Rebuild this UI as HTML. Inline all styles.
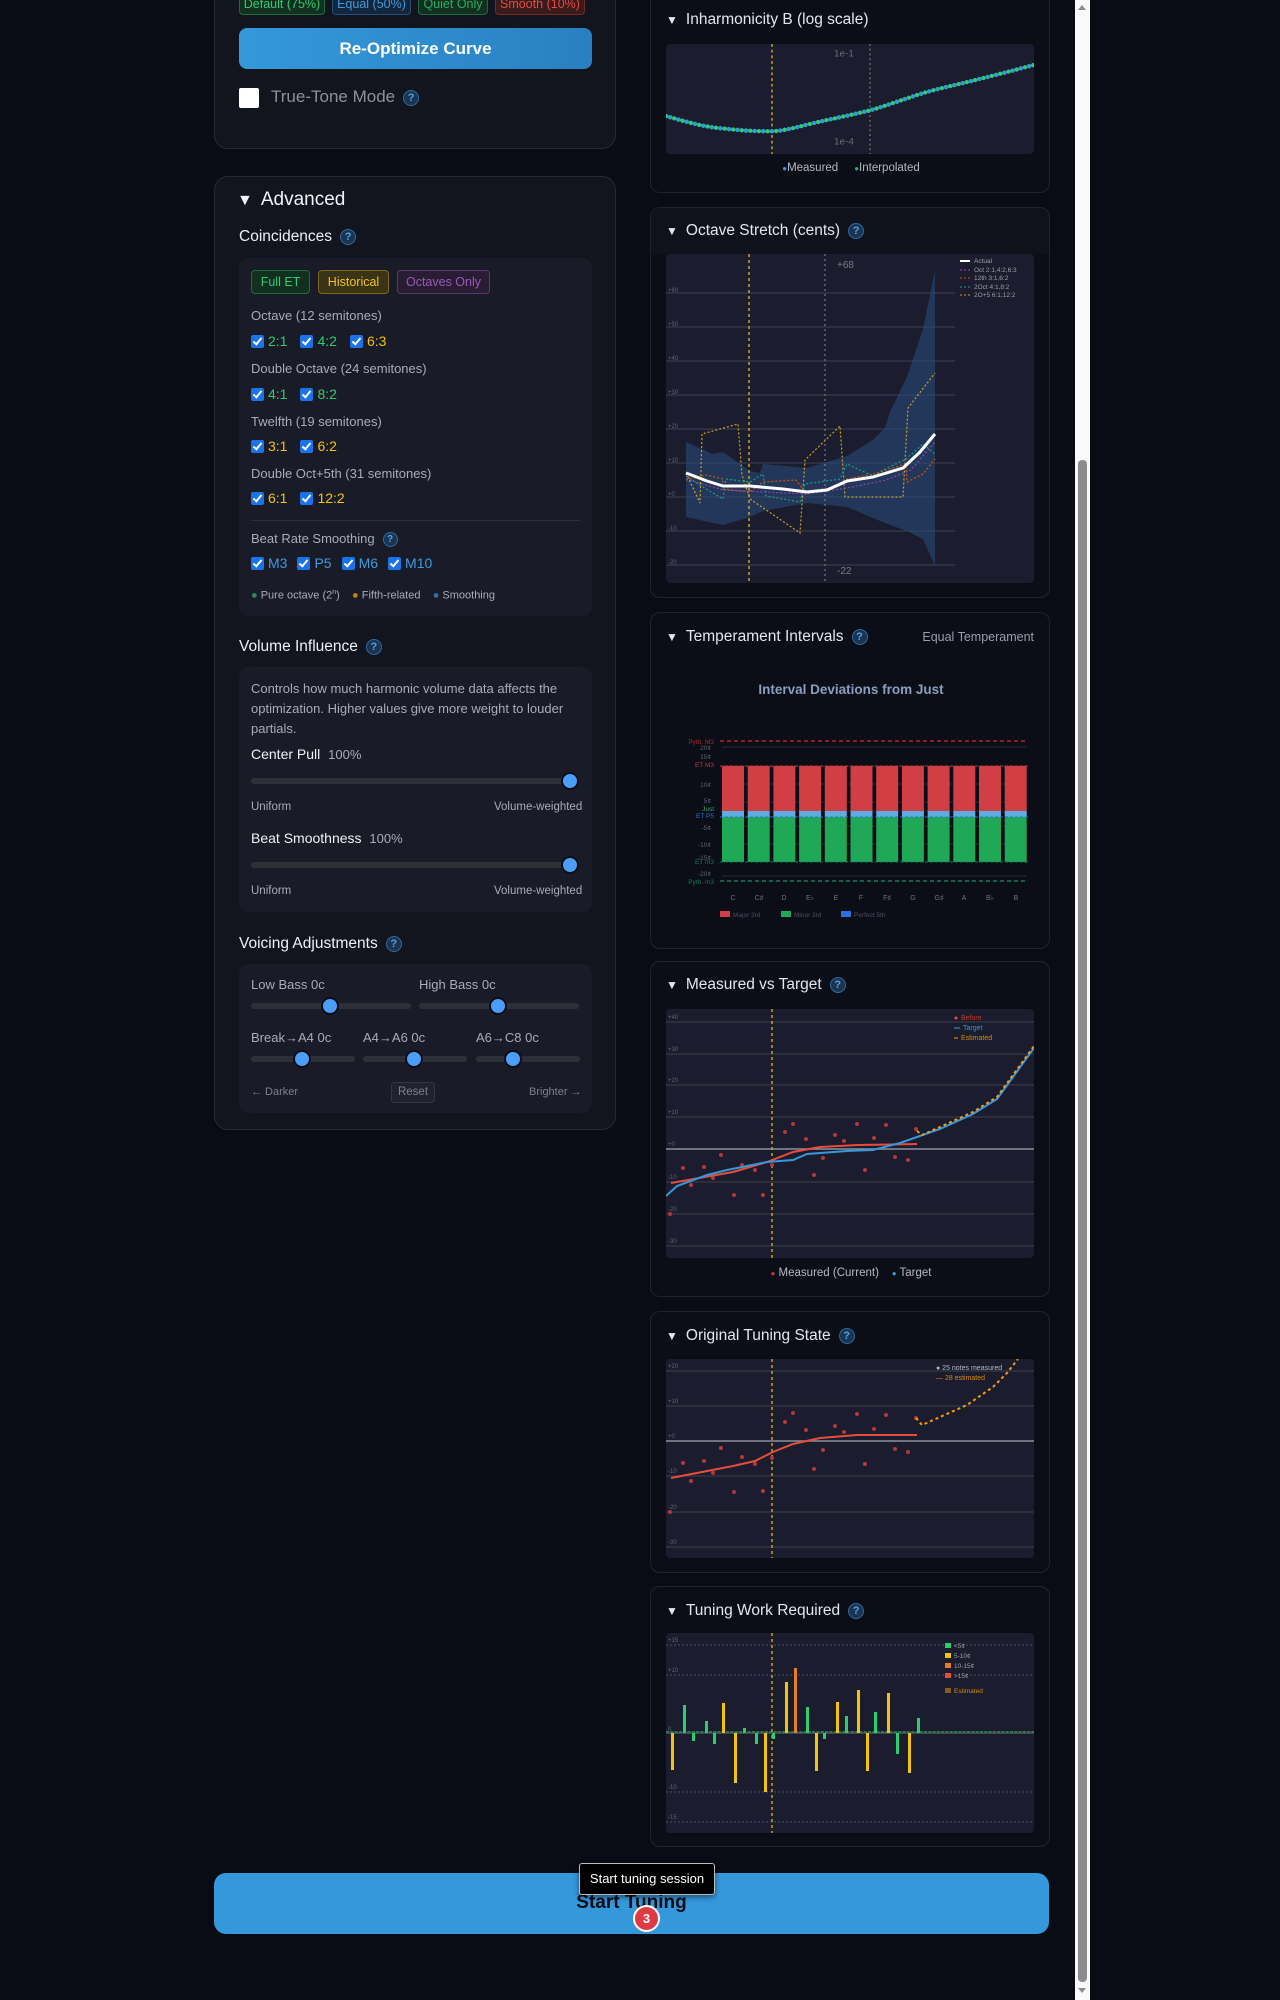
<!DOCTYPE html>
<html><head><meta charset="utf-8">
<style>
*{box-sizing:border-box;margin:0;padding:0}
html,body{width:1280px;height:2000px;overflow:hidden;background:#0a0c15;font-family:"Liberation Sans",sans-serif;color:#d6d8e0}
.a{position:absolute}
.panel{position:absolute;background:#12141e;border:1px solid #262938;border-radius:14px}
.box{position:absolute;background:#191b27;border-radius:10px}
.card{position:absolute;left:650px;width:400px;background:#0b0d17;border:1px solid #1f2230;border-radius:10px;overflow:hidden}
.ct{position:absolute;left:15px;font-size:15.5px;color:#e4e6ee;white-space:nowrap}
.q{display:inline-block;width:16px;height:16px;border-radius:50%;background:#1b3550;border:1px solid #2d6aa0;color:#4da3e8;font-size:11px;line-height:14px;text-align:center;font-weight:bold;vertical-align:middle;margin-left:8px}
.chip{position:absolute;height:21px;border-radius:4px;font-size:12.5px;line-height:19px;text-align:center;border:1px solid}
.h{position:absolute;left:239px;font-size:15.5px;color:#eef0f5;white-space:nowrap}
.lbl{position:absolute;font-size:13px;color:#a9acb8;white-space:nowrap}
.cb{display:inline-block;width:13px;height:13px;background:#1a73e8;border-radius:2px;vertical-align:-2px;margin-right:4px;position:relative}
.cb:after{content:"";position:absolute;left:4px;top:1px;width:3px;height:7px;border:solid #fff;border-width:0 2px 2px 0;transform:rotate(40deg)}
.row{position:absolute;left:251px;font-size:14px;white-space:nowrap}
.row span.i{margin-right:13px}
.trk{position:absolute;height:6px;background:#2e3038;border-radius:3px}
.knob{position:absolute;width:18px;height:18px;border-radius:50%;background:#4a9df8;border:2px solid #0b0d17}
.chart{position:absolute;left:15px;background:#1b1d2e;border-radius:4px;overflow:hidden}
svg text{font-family:"Liberation Sans",sans-serif}
</style></head><body>

<!-- LEFT top panel -->
<div class="panel" style="left:214px;top:-20px;width:402px;height:169px"></div>
<div class="chip" style="left:239px;top:-6px;width:86px;color:#2ecc71;border-color:#1f6b40;background:#12301f">Default (75%)</div>
<div class="chip" style="left:332px;top:-6px;width:79px;color:#3d9be0;border-color:#24507a;background:#14263c">Equal (50%)</div>
<div class="chip" style="left:418px;top:-6px;width:70px;color:#27ae60;border-color:#1f6b40;background:#12301f">Quiet Only</div>
<div class="chip" style="left:495px;top:-6px;width:90px;color:#e74c3c;border-color:#7a2a25;background:#3a1a1c">Smooth (10%)</div>
<div class="a" style="left:239px;top:28px;width:353px;height:41px;border-radius:8px;background:linear-gradient(90deg,#3498db,#2980c0);color:#fff;font-weight:bold;font-size:17px;text-align:center;line-height:41px">Re-Optimize Curve</div>
<div class="a" style="left:239px;top:88px;width:20px;height:20px;background:#fff;border-radius:2px"></div>
<div class="a" style="left:271px;top:87px;font-size:17px;color:#8e909a">True-Tone Mode<span class="q">?</span></div>

<!-- Advanced panel -->
<div class="panel" style="left:214px;top:176px;width:402px;height:954px"></div>
<div class="a" style="left:237px;top:189px;font-size:19px;color:#f0f2f6"><span style="font-size:16px;margin-right:8px">▼</span>Advanced</div>
<div class="h" style="top:228px">Coincidences<span class="q">?</span></div>
<div class="box" style="left:239px;top:258px;width:353px;height:358px"></div>
<div class="chip" style="left:251px;top:270px;width:59px;height:24px;line-height:22px;color:#2ecc71;border-color:#1f6b40;background:#12301f">Full ET</div>
<div class="chip" style="left:318px;top:270px;width:71px;height:24px;line-height:22px;color:#f1c40f;border-color:#7a6a1a;background:#3a3316">Historical</div>
<div class="chip" style="left:397px;top:270px;width:93px;height:24px;line-height:22px;color:#9b59b6;border-color:#5b3a6e;background:#281d34">Octaves Only</div>
<div class="lbl" style="left:251px;top:308px">Octave (12 semitones)</div>
<div class="row" style="top:333px"><span class="i" style="color:#2ecc71"><span class="cb"></span>2:1</span><span class="i" style="color:#2ecc71"><span class="cb"></span>4:2</span><span class="i" style="color:#f1c40f"><span class="cb"></span>6:3</span></div>
<div class="lbl" style="left:251px;top:361px">Double Octave (24 semitones)</div>
<div class="row" style="top:386px"><span class="i" style="color:#2ecc71"><span class="cb"></span>4:1</span><span class="i" style="color:#2ecc71"><span class="cb"></span>8:2</span></div>
<div class="lbl" style="left:251px;top:414px">Twelfth (19 semitones)</div>
<div class="row" style="top:438px"><span class="i" style="color:#f1c40f"><span class="cb"></span>3:1</span><span class="i" style="color:#f1c40f"><span class="cb"></span>6:2</span></div>
<div class="lbl" style="left:251px;top:466px">Double Oct+5th (31 semitones)</div>
<div class="row" style="top:490px"><span class="i" style="color:#f1c40f"><span class="cb"></span>6:1</span><span class="i" style="color:#f1c40f"><span class="cb"></span>12:2</span></div>
<div class="a" style="left:251px;top:520px;width:329px;height:1px;background:#2c2f3c"></div>
<div class="lbl" style="left:251px;top:531px">Beat Rate Smoothing<span class="q" style="width:15px;height:15px;font-size:10px;line-height:13px">?</span></div>
<div class="row" style="top:555px;color:#3d9be0"><span class="i" style="margin-right:10px"><span class="cb"></span>M3</span><span class="i" style="margin-right:10px"><span class="cb"></span>P5</span><span class="i" style="margin-right:10px"><span class="cb"></span>M6</span><span class="i"><span class="cb"></span>M10</span></div>
<div class="a" style="left:251px;top:589px;font-size:11px;color:#a9acb8;white-space:nowrap"><span style="color:#2e8b57">●</span> Pure octave (2<sup style="font-size:7px">n</sup>) &nbsp;&nbsp; <span style="color:#b8860b">●</span> Fifth-related &nbsp;&nbsp; <span style="color:#2f6fa3">●</span> Smoothing</div>

<div class="h" style="top:638px">Volume Influence<span class="q">?</span></div>
<div class="box" style="left:239px;top:667px;width:353px;height:245px"></div>
<div class="a" style="left:251px;top:679px;width:330px;font-size:13px;line-height:20px;color:#a9acb8">Controls how much harmonic volume data affects the optimization. Higher values give more weight to louder partials.</div>
<div class="a" style="left:251px;top:746px;font-size:14px;color:#f0f2f6">Center Pull <span style="color:#a9acb8;font-size:13px;margin-left:4px">100%</span></div>
<div class="trk" style="left:251px;top:778px;width:328px"></div><div class="knob" style="left:561px;top:772px"></div>
<div class="lbl" style="left:251px;top:801px;font-size:11.5px">Uniform</div><div class="lbl" style="left:494px;top:801px;font-size:11.5px">Volume-weighted</div>
<div class="a" style="left:251px;top:830px;font-size:14px;color:#f0f2f6">Beat Smoothness <span style="color:#a9acb8;font-size:13px;margin-left:4px">100%</span></div>
<div class="trk" style="left:251px;top:862px;width:328px"></div><div class="knob" style="left:561px;top:856px"></div>
<div class="lbl" style="left:251px;top:885px;font-size:11.5px">Uniform</div><div class="lbl" style="left:494px;top:885px;font-size:11.5px">Volume-weighted</div>

<div class="h" style="top:935px">Voicing Adjustments<span class="q">?</span></div>
<div class="box" style="left:239px;top:964px;width:353px;height:149px"></div>
<div class="lbl" style="left:251px;top:977px">Low Bass 0c</div><div class="lbl" style="left:419px;top:977px">High Bass 0c</div>
<div class="trk" style="left:251px;top:1003px;width:160px"></div><div class="knob" style="left:321px;top:997px"></div>
<div class="trk" style="left:419px;top:1003px;width:160px"></div><div class="knob" style="left:489px;top:997px"></div>
<div class="lbl" style="left:251px;top:1030px">Break→A4 0c</div><div class="lbl" style="left:363px;top:1030px">A4→A6 0c</div><div class="lbl" style="left:476px;top:1030px">A6→C8 0c</div>
<div class="trk" style="left:251px;top:1056px;width:104px"></div><div class="knob" style="left:293px;top:1050px"></div>
<div class="trk" style="left:363px;top:1056px;width:104px"></div><div class="knob" style="left:405px;top:1050px"></div>
<div class="trk" style="left:476px;top:1056px;width:104px"></div><div class="knob" style="left:504px;top:1050px"></div>
<div class="lbl" style="left:251px;top:1086px;font-size:11px;color:#7d808c">← Darker</div>
<div class="a" style="left:391px;top:1082px;width:44px;height:21px;border:1px solid #333646;background:#202230;border-radius:3px;font-size:11.5px;color:#7d808c;text-align:center;line-height:19px">Reset</div>
<div class="lbl" style="left:529px;top:1086px;font-size:11px;color:#7d808c">Brighter →</div>

<!-- RIGHT cards -->
<!-- 1 Inharmonicity -->
<div class="card" style="top:-20px;height:213px">
<div class="ct" style="top:30px"><span style="font-size:12px;margin-right:8px">▼</span>Inharmonicity B (log scale)</div>
<div class="chart" style="top:63px;width:368px;height:110px">
<svg width="368" height="110" viewBox="0 0 368 116" preserveAspectRatio="none">
<line x1="106" y1="0" x2="106" y2="116" stroke="#c9a227" stroke-width="1.5" stroke-dasharray="3 3"/>
<line x1="204" y1="0" x2="204" y2="116" stroke="#8a8c98" stroke-width="1" stroke-dasharray="2 3"/>
<text x="168" y="13" font-size="10" fill="#666a78" font-family="Liberation Mono">1e-1</text>
<text x="168" y="106" font-size="10" fill="#666a78" font-family="Liberation Mono">1e-4</text>
<path d="M0,76 C20,82 40,88 57,89 C80,92 95,92 107,92 C120,91 130,88 141,85 C165,79 185,75 204,70 C230,62 250,53 274,47 C310,38 340,30 368,22" fill="none" stroke="#2ecc71" stroke-width="4.5" stroke-linecap="round" stroke-dasharray="0 4.3"/>
<path d="M0,76 C20,82 40,88 57,89 C80,92 95,92 107,92 C120,91 130,88 141,85 C165,79 185,75 204,70 C230,62 250,53 274,47 C310,38 340,30 368,22" fill="none" stroke="#3498db" stroke-width="4.5" stroke-linecap="round" stroke-dasharray="0 8.6" stroke-dashoffset="4.3"/>
</svg></div>
<div class="a" style="left:0;width:400px;top:181px;text-align:center;font-size:11.5px;color:#b4b7c2"><span style="color:#3498db;font-size:8px">●</span>Measured &nbsp;&nbsp;&nbsp; <span style="color:#27ae60;font-size:8px">●</span>Interpolated</div>
</div>

<!-- 2 Octave Stretch -->
<div class="card" style="top:207px;height:391px">
<div class="a" style="left:0;top:0;width:400px;height:46px;background:#10121b"></div>
<div class="ct" style="top:14px"><span style="font-size:12px;margin-right:8px">▼</span>Octave Stretch (cents)<span class="q">?</span></div>
<div class="chart" style="top:46px;width:368px;height:329px">
<svg width="368" height="329">
<g stroke="#383b4c" stroke-width="1.3"><line x1="0" y1="39" x2="289" y2="39"/><line x1="0" y1="73" x2="289" y2="73"/><line x1="0" y1="107" x2="289" y2="107"/><line x1="0" y1="141" x2="289" y2="141"/><line x1="0" y1="175" x2="289" y2="175"/><line x1="0" y1="209" x2="289" y2="209"/><line x1="0" y1="243" x2="289" y2="243"/><line x1="0" y1="277" x2="289" y2="277"/><line x1="0" y1="311" x2="289" y2="311"/></g>
<g font-size="6" fill="#5e6272"><text x="2" y="38">+60</text><text x="2" y="72">+50</text><text x="2" y="106">+40</text><text x="2" y="140">+30</text><text x="2" y="174">+20</text><text x="2" y="208">+10</text><text x="2" y="242">+0</text><text x="2" y="276">-10</text><text x="2" y="310">-20</text></g>
<polygon fill="#2a4a78" fill-opacity="0.6" points="20,188 47,200 57,198 84,217 94,219 97,210 141,214 181,202 207,186 219,174 224,158 241,123 257,75 269,16 269,312 257,285 241,277 219,269 181,253 141,249 97,257 84,263 57,271 20,263"/>
<line x1="83" y1="0" x2="83" y2="329" stroke="#c9a227" stroke-width="1.5" stroke-dasharray="3 3"/>
<line x1="159" y1="0" x2="159" y2="329" stroke="#8a8c98" stroke-width="1" stroke-dasharray="2 3"/>
<text x="171" y="14" font-size="10" fill="#777a88">+68</text>
<text x="171" y="320" font-size="10" fill="#777a88">-22</text>
<polyline fill="none" stroke="#c9a227" stroke-width="1.2" stroke-dasharray="2 2" points="20,219 34,249 36,180 72,170 76,221 84,245 134,279 139,206 174,172 179,243 237,243 242,154 269,119"/>
<polyline fill="none" stroke="#16a085" stroke-width="1.2" stroke-dasharray="2 2" points="20,222 40,235 57,245 60,225 84,228 97,220 100,242 134,248 139,230 174,225 181,210 207,222 219,215 240,205 257,190 269,200"/>
<polyline fill="none" stroke="#d35400" stroke-width="1.2" stroke-dasharray="2 2" points="20,226 40,221 57,225 57,235 84,238 97,228 130,226 139,238 174,232 181,225 207,220 240,210 241,228 257,220 269,205"/>
<polyline fill="none" stroke="#8e44ad" stroke-width="1.2" stroke-dasharray="2 2" points="20,225 57,236 97,238 141,240 181,234 220,226 245,216 269,188"/>
<polyline fill="none" stroke="#fff" stroke-width="3" stroke-linejoin="round" points="20,219 41,227 57,232 84,232 117,235 141,238 161,236 181,227 207,223 237,214 254,198 269,180"/>
<g font-size="6.5" fill="#9a9dab"><line x1="294" y1="7" x2="304" y2="7" stroke="#fff" stroke-width="2"/><text x="308" y="9">Actual</text>
<line x1="294" y1="16" x2="304" y2="16" stroke="#8e44ad" stroke-dasharray="2 2"/><text x="308" y="18">Oct 2:1,4:2,6:3</text>
<line x1="294" y1="24" x2="304" y2="24" stroke="#d35400" stroke-dasharray="2 2"/><text x="308" y="26">12th 3:1,6:2</text>
<line x1="294" y1="33" x2="304" y2="33" stroke="#16a085" stroke-dasharray="2 2"/><text x="308" y="35">2Oct 4:1,8:2</text>
<line x1="294" y1="41" x2="304" y2="41" stroke="#c9a227" stroke-dasharray="2 2"/><text x="308" y="43">2O+5 6:1,12:2</text></g>
</svg></div>
</div>

<!-- 3 Temperament -->
<div class="card" style="top:612px;height:337px">
<div class="ct" style="top:15px"><span style="font-size:12px;margin-right:8px">▼</span>Temperament Intervals<span class="q">?</span></div>
<div class="a" style="right:15px;top:17px;font-size:12.5px;color:#9a9dab">Equal Temperament</div>
<svg class="a" style="left:16px;top:53px" width="368" height="265">
<text x="184" y="28" font-size="13.5" font-weight="bold" fill="#8a9ec0" text-anchor="middle">Interval Deviations from Just</text>
<g stroke="#262a36" stroke-width="1"><line x1="55" y1="81" x2="360" y2="81"/><line x1="55" y1="100" x2="360" y2="100"/><line x1="55" y1="118" x2="360" y2="118"/><line x1="55" y1="136" x2="360" y2="136"/><line x1="55" y1="160" x2="360" y2="160"/><line x1="55" y1="178" x2="360" y2="178"/><line x1="55" y1="210" x2="360" y2="210"/></g>
<line x1="53" y1="75" x2="361" y2="75" stroke="#b3262c" stroke-dasharray="4 3" stroke-width="1.5"/>
<line x1="53" y1="215" x2="361" y2="215" stroke="#117a55" stroke-dasharray="4 3" stroke-width="1.5"/>
<g font-size="6.5" text-anchor="end"><text x="47" y="78" fill="#b3262c">Pyth. M3</text><text x="44" y="84" fill="#5e6272">20¢</text><text x="44" y="93" fill="#5e6272">15¢</text><text x="47" y="101" fill="#c0393b">ET M3</text><text x="44" y="121" fill="#5e6272">10¢</text><text x="44" y="137" fill="#5e6272">5¢</text><text x="47" y="145" fill="#27ae60">Just</text><text x="47" y="152" fill="#2f6fd0">ET P5</text><text x="44" y="164" fill="#5e6272">-5¢</text><text x="44" y="181" fill="#5e6272">-10¢</text><text x="44" y="194" fill="#5e6272">-15¢</text><text x="47" y="198" fill="#117a55">ET m3</text><text x="44" y="210" fill="#5e6272">-20¢</text><text x="47" y="218" fill="#117a55">Pyth. m3</text></g>
<g>
<rect x="55" y="100" width="22" height="45" fill="#d13f44"/><rect x="55" y="145" width="22" height="6" fill="#5dade2"/><rect x="55" y="151" width="22" height="45" fill="#1fa855"/>
<rect x="80.7" y="100" width="22" height="45" fill="#d13f44"/><rect x="80.7" y="145" width="22" height="6" fill="#5dade2"/><rect x="80.7" y="151" width="22" height="45" fill="#1fa855"/>
<rect x="106.4" y="100" width="22" height="45" fill="#d13f44"/><rect x="106.4" y="145" width="22" height="6" fill="#5dade2"/><rect x="106.4" y="151" width="22" height="45" fill="#1fa855"/>
<rect x="132.1" y="100" width="22" height="45" fill="#d13f44"/><rect x="132.1" y="145" width="22" height="6" fill="#5dade2"/><rect x="132.1" y="151" width="22" height="45" fill="#1fa855"/>
<rect x="157.8" y="100" width="22" height="45" fill="#d13f44"/><rect x="157.8" y="145" width="22" height="6" fill="#5dade2"/><rect x="157.8" y="151" width="22" height="45" fill="#1fa855"/>
<rect x="183.5" y="100" width="22" height="45" fill="#d13f44"/><rect x="183.5" y="145" width="22" height="6" fill="#5dade2"/><rect x="183.5" y="151" width="22" height="45" fill="#1fa855"/>
<rect x="209.2" y="100" width="22" height="45" fill="#d13f44"/><rect x="209.2" y="145" width="22" height="6" fill="#5dade2"/><rect x="209.2" y="151" width="22" height="45" fill="#1fa855"/>
<rect x="234.9" y="100" width="22" height="45" fill="#d13f44"/><rect x="234.9" y="145" width="22" height="6" fill="#5dade2"/><rect x="234.9" y="151" width="22" height="45" fill="#1fa855"/>
<rect x="260.6" y="100" width="22" height="45" fill="#d13f44"/><rect x="260.6" y="145" width="22" height="6" fill="#5dade2"/><rect x="260.6" y="151" width="22" height="45" fill="#1fa855"/>
<rect x="286.3" y="100" width="22" height="45" fill="#d13f44"/><rect x="286.3" y="145" width="22" height="6" fill="#5dade2"/><rect x="286.3" y="151" width="22" height="45" fill="#1fa855"/>
<rect x="312" y="100" width="22" height="45" fill="#d13f44"/><rect x="312" y="145" width="22" height="6" fill="#5dade2"/><rect x="312" y="151" width="22" height="45" fill="#1fa855"/>
<rect x="337.7" y="100" width="22" height="45" fill="#d13f44"/><rect x="337.7" y="145" width="22" height="6" fill="#5dade2"/><rect x="337.7" y="151" width="22" height="45" fill="#1fa855"/>
</g>
<line x1="53" y1="100" x2="361" y2="100" stroke="#c0393b" stroke-dasharray="3 2"/>
<line x1="53" y1="151" x2="361" y2="151" stroke="#2f6fd0" stroke-dasharray="3 2"/>
<line x1="53" y1="196" x2="361" y2="196" stroke="#117a55" stroke-dasharray="3 2"/>
<g font-size="7" fill="#6d7080" text-anchor="middle"><text x="66" y="234">C</text><text x="92" y="234">C♯</text><text x="117" y="234">D</text><text x="143" y="234">E♭</text><text x="169" y="234">E</text><text x="194" y="234">F</text><text x="220" y="234">F♯</text><text x="246" y="234">G</text><text x="272" y="234">G♯</text><text x="297" y="234">A</text><text x="323" y="234">B♭</text><text x="349" y="234">B</text></g>
<g font-size="6.5" fill="#4e5262"><rect x="53" y="245" width="10" height="6" fill="#d13f44"/><text x="66" y="251">Major 3rd</text><rect x="114" y="245" width="10" height="6" fill="#1fa855"/><text x="127" y="251">Minor 3rd</text><rect x="174" y="245" width="10" height="6" fill="#2d6ee0"/><text x="187" y="251">Perfect 5th</text></g>
</svg>
</div>

<!-- 4 Measured vs Target -->
<div class="card" style="top:961px;height:336px">
<div class="ct" style="top:14px"><span style="font-size:12px;margin-right:8px">▼</span>Measured vs Target<span class="q">?</span></div>
<div class="chart" style="top:47px;width:368px;height:249px">
<svg width="368" height="249">
<g stroke="#363948" stroke-width="1.3"><line x1="0" y1="13" x2="368" y2="13"/><line x1="0" y1="45" x2="368" y2="45"/><line x1="0" y1="76" x2="368" y2="76"/><line x1="0" y1="108" x2="368" y2="108"/><line x1="0" y1="173" x2="368" y2="173"/><line x1="0" y1="205" x2="368" y2="205"/><line x1="0" y1="237" x2="368" y2="237"/></g>
<line x1="0" y1="140" x2="368" y2="140" stroke="#8d909c" stroke-width="1.5"/>
<g font-size="6" fill="#5e6272"><text x="2" y="10">+40</text><text x="2" y="42">+30</text><text x="2" y="73">+20</text><text x="2" y="105">+10</text><text x="2" y="137">+0</text><text x="2" y="170">-10</text><text x="2" y="202">-20</text><text x="2" y="234">-30</text></g>
<line x1="106" y1="0" x2="106" y2="249" stroke="#c9a227" stroke-width="1.5" stroke-dasharray="3 3"/>
<g fill="#b03a3a"><circle cx="4" cy="205" r="2"/><circle cx="17" cy="159" r="2"/><circle cx="25" cy="176" r="2"/><circle cx="38" cy="158" r="2"/><circle cx="47" cy="169" r="2"/><circle cx="55" cy="146" r="2"/><circle cx="68" cy="186" r="2"/><circle cx="76" cy="156" r="2"/><circle cx="89" cy="161" r="2"/><circle cx="97" cy="186" r="2"/><circle cx="106" cy="156" r="2"/><circle cx="119" cy="123" r="2"/><circle cx="127" cy="115" r="2"/><circle cx="140" cy="130" r="2"/><circle cx="148" cy="166" r="2"/><circle cx="157" cy="149" r="2"/><circle cx="169" cy="126" r="2"/><circle cx="178" cy="132" r="2"/><circle cx="191" cy="115" r="2"/><circle cx="199" cy="161" r="2"/><circle cx="208" cy="129" r="2"/><circle cx="220" cy="116" r="2"/><circle cx="229" cy="148" r="2"/><circle cx="242" cy="151" r="2"/><circle cx="250" cy="120" r="2"/></g>
<polyline fill="none" stroke="#e74c3c" stroke-width="2" points="5,174 67,163 101,153 127,143 154,138 192,136 251,135"/>
<polyline fill="none" stroke="#3498db" stroke-width="2" points="0,187 11,177 41,166 61,161 101,153 127,151 141,145 181,142 207,141 234,134 251,128 274,120 307,105 331,90 347,68 368,39"/>
<polyline fill="none" stroke="#f39c12" stroke-width="2" stroke-dasharray="3 3" points="251,122 256,126 274,118 307,103 331,88 347,66 368,37"/>
<g font-size="7"><circle cx="290" cy="9" r="1.5" fill="#e74c3c"/><text x="295" y="11" fill="#c0392b">Before</text><line x1="288" y1="19" x2="294" y2="19" stroke="#3498db"/><text x="297" y="21" fill="#3498db">Target</text><line x1="288" y1="29" x2="292" y2="29" stroke="#f39c12"/><text x="295" y="31" fill="#d68910">Estimated</text></g>
</svg></div>
<div class="a" style="left:0;width:400px;top:305px;text-align:center;font-size:11.5px;color:#b4b7c2"><span style="color:#c0392b;font-size:8px">●</span> Measured (Current) &nbsp;&nbsp; <span style="color:#3498db;font-size:8px">●</span> Target</div>
</div>

<!-- 5 Original Tuning State -->
<div class="card" style="top:1311px;height:262px">
<div class="ct" style="top:15px"><span style="font-size:12px;margin-right:8px">▼</span>Original Tuning State<span class="q">?</span></div>
<div class="chart" style="top:47px;width:368px;height:199px">
<svg width="368" height="199">
<g stroke="#363948" stroke-width="1.3"><line x1="0" y1="12" x2="368" y2="12"/><line x1="0" y1="47" x2="368" y2="47"/><line x1="0" y1="117" x2="368" y2="117"/><line x1="0" y1="153" x2="368" y2="153"/><line x1="0" y1="188" x2="368" y2="188"/></g>
<line x1="0" y1="82" x2="368" y2="82" stroke="#8d909c" stroke-width="1.5"/>
<g font-size="6" fill="#5e6272"><text x="2" y="9">+20</text><text x="2" y="44">+10</text><text x="2" y="79">+0</text><text x="2" y="114">-10</text><text x="2" y="150">-20</text><text x="2" y="185">-30</text></g>
<line x1="106" y1="0" x2="106" y2="199" stroke="#c9a227" stroke-width="1.5" stroke-dasharray="3 3"/>
<g fill="#b03a3a"><circle cx="4" cy="153" r="2"/><circle cx="17" cy="104" r="2"/><circle cx="25" cy="122" r="2"/><circle cx="38" cy="102" r="2"/><circle cx="47" cy="114" r="2"/><circle cx="55" cy="89" r="2"/><circle cx="68" cy="133" r="2"/><circle cx="76" cy="98" r="2"/><circle cx="89" cy="105" r="2"/><circle cx="97" cy="132" r="2"/><circle cx="106" cy="99" r="2"/><circle cx="119" cy="63" r="2"/><circle cx="127" cy="54" r="2"/><circle cx="140" cy="71" r="2"/><circle cx="148" cy="110" r="2"/><circle cx="157" cy="91" r="2"/><circle cx="169" cy="67" r="2"/><circle cx="178" cy="73" r="2"/><circle cx="191" cy="55" r="2"/><circle cx="199" cy="105" r="2"/><circle cx="208" cy="70" r="2"/><circle cx="220" cy="56" r="2"/><circle cx="229" cy="90" r="2"/><circle cx="242" cy="93" r="2"/><circle cx="250" cy="59" r="2"/></g>
<polyline fill="none" stroke="#e74c3c" stroke-width="2" points="5,119 67,107 89,102 107,93 127,85 154,79 191,76 251,76"/>
<polyline fill="none" stroke="#f39c12" stroke-width="2" stroke-dasharray="3 3" points="250,59 256,66 274,58 301,46 327,28 341,14 352,0"/>
<g font-size="7"><text x="270" y="11" fill="#b4b7c2">● 25 notes measured</text><text x="270" y="21" fill="#d68910">— 28 estimated</text></g>
</svg></div>
</div>

<!-- 6 Tuning Work Required -->
<div class="card" style="top:1586px;height:261px">
<div class="ct" style="top:15px"><span style="font-size:12px;margin-right:8px">▼</span>Tuning Work Required<span class="q">?</span></div>
<div class="chart" style="top:46px;width:368px;height:200px">
<svg width="368" height="200">
<g stroke="#4a4d5c" stroke-width="1" stroke-dasharray="2 2"><line x1="0" y1="12" x2="368" y2="12"/><line x1="0" y1="42" x2="368" y2="42"/><line x1="0" y1="159" x2="368" y2="159"/><line x1="0" y1="189" x2="368" y2="189"/></g>
<g font-size="6" fill="#5e6272"><text x="2" y="9">+15</text><text x="2" y="39">+10</text><text x="2" y="98">0</text><text x="2" y="156">-10</text><text x="2" y="186">-15</text></g>
<line x1="0" y1="100" x2="368" y2="100" stroke="#6d707c" stroke-width="1"/>
<line x1="0" y1="99" x2="368" y2="99" stroke="#2a7a4a" stroke-width="2" stroke-dasharray="3 1.3"/>
<line x1="106" y1="0" x2="106" y2="200" stroke="#c9a227" stroke-width="1.5" stroke-dasharray="3 3"/>
<g fill="#f1c40f"><rect x="5" y="100" width="3" height="37"/><rect x="56" y="70" width="3" height="30"/><rect x="68" y="100" width="3" height="50"/><rect x="98" y="100" width="3" height="59"/><rect x="119" y="49" width="3" height="51"/><rect x="149" y="100" width="3" height="38"/><rect x="170" y="69" width="3" height="31"/><rect x="191" y="57" width="3" height="43"/><rect x="200" y="100" width="3" height="38"/><rect x="221" y="60" width="3" height="40"/><rect x="242" y="100" width="3" height="40"/></g>
<rect x="128" y="35" width="3" height="65" fill="#e67e22"/>
<g fill="#2ecc71"><rect x="17" y="72" width="3" height="28"/><rect x="26" y="100" width="3" height="8"/><rect x="39" y="88" width="3" height="12"/><rect x="47" y="100" width="3" height="11"/><rect x="77" y="95" width="3" height="5"/><rect x="89" y="100" width="3" height="11"/><rect x="106" y="100" width="3" height="6"/><rect x="140" y="74" width="3" height="26"/><rect x="157" y="100" width="3" height="6"/><rect x="179" y="83" width="3" height="17"/><rect x="208" y="79" width="3" height="21"/><rect x="230" y="100" width="3" height="21"/><rect x="251" y="85" width="3" height="15"/></g>
<g font-size="6.5" fill="#9a9dab"><rect x="279" y="10" width="6" height="5" fill="#2ecc71"/><text x="288" y="15">&lt;5¢</text><rect x="279" y="20" width="6" height="5" fill="#f1c40f"/><text x="288" y="25">5-10¢</text><rect x="279" y="30" width="6" height="5" fill="#e67e22"/><text x="288" y="35">10-15¢</text><rect x="279" y="40" width="6" height="5" fill="#e74c3c"/><text x="288" y="45">&gt;15¢</text><rect x="279" y="55" width="6" height="5" fill="#8a5a20"/><text x="288" y="60" fill="#d68910">Estimated</text></g>
</svg></div>
</div>

<!-- Start Tuning -->
<div class="a" style="left:214px;top:1873px;width:835px;height:61px;background:#3498db;border-radius:12px;text-align:center;font-weight:bold;font-size:19px;color:#0a0c15;line-height:60px">Start Tuning</div>
<div class="a" style="left:579px;top:1863px;width:136px;height:32px;background:#000;border:1px solid #bbb;border-radius:3px;color:#fff;font-size:13px;text-align:center;line-height:30px;box-shadow:0 2px 6px rgba(0,0,0,.5)">Start tuning session</div>
<div class="a" style="left:633px;top:1905px;width:27px;height:27px;border-radius:50%;background:#e03a45;border:2px solid #fff;color:#fff;font-weight:bold;font-size:13px;text-align:center;line-height:23px">3</div>

<!-- scrollbar -->
<div class="a" style="left:1075px;top:0;width:15px;height:2000px;background:#fafafa"></div>
<div class="a" style="left:1078px;top:460px;width:9px;height:1522px;background:#8c8c8c;border-radius:4px"></div>
<div class="a" style="left:1078px;top:5px;width:0;height:0;border-left:4.5px solid transparent;border-right:4.5px solid transparent;border-bottom:5px solid #8c8c8c"></div>
<div class="a" style="left:1078px;top:1988px;width:0;height:0;border-left:4.5px solid transparent;border-right:4.5px solid transparent;border-top:5px solid #8c8c8c"></div>
</body></html>
